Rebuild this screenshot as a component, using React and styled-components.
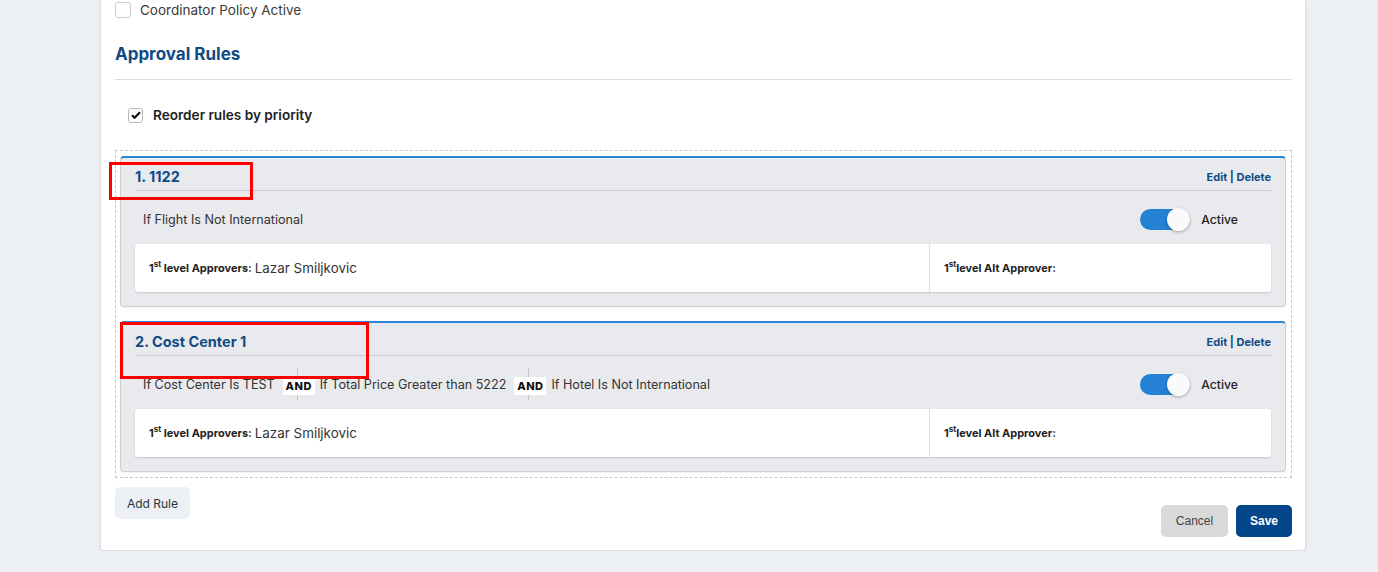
import React from 'react';
import styled, { createGlobalStyle } from 'styled-components';

const rules = [
  {
    id: 1,
    title: '1. 1122',
    conditions: ['If Flight Is Not International'],
    approver: 'Lazar Smiljkovic',
    mark: { left: -12, top: 4, width: 144, height: 38 },
  },
  {
    id: 2,
    title: '2. Cost Center 1',
    conditions: [
      'If Cost Center Is TEST',
      'If Total Price Greater than 5222',
      'If Hotel Is Not International',
    ],
    approver: 'Lazar Smiljkovic',
    mark: { left: -1, top: -1, width: 249, height: 57 },
  },
];

const App = () => {
  return (
    <>
      <GlobalStyle />
      <Panel>
        <CheckRow>
          <Box />
          <span>Coordinator Policy Active</span>
        </CheckRow>

        <Heading>Approval Rules</Heading>
        <Divider />

        <ReorderRow>
          <Box $checked>
            <svg width="12" height="12" viewBox="0 0 12 12">
              <path d="M2 6.2l2.6 2.6L10 3.2" fill="none" stroke="#111" strokeWidth="2.2" />
            </svg>
          </Box>
          <span>Reorder rules by priority</span>
        </ReorderRow>

        <DropZone>
          {rules.map((rule) => (
            <RuleCard key={rule.id}>
              <RuleHeader>
                <RuleTitle>{rule.title}</RuleTitle>
                <Links>
                  <a>Edit</a> | <a>Delete</a>
                </Links>
              </RuleHeader>

              <ConditionRow>
                <Conditions>
                  {rule.conditions.map((c, i) => (
                    <Condition key={c} $first={i === 0}>
                      {i > 0 && <AndBadge>AND</AndBadge>}
                      {c}
                    </Condition>
                  ))}
                </Conditions>
                <ToggleWrap>
                  <Toggle><Knob /></Toggle>
                  <span>Active</span>
                </ToggleWrap>
              </ConditionRow>

              <Approvers>
                <ApproverCol>
                  <Label>1<sup>st</sup> level Approvers:</Label>
                  <Name>{rule.approver}</Name>
                </ApproverCol>
                <ApproverCol $alt>
                  <Label>1<sup>st</sup>level Alt Approver:</Label>
                </ApproverCol>
              </Approvers>

              <Marker
                style={{
                  left: rule.mark.left,
                  top: rule.mark.top,
                  width: rule.mark.width,
                  height: rule.mark.height,
                }}
              />
            </RuleCard>
          ))}
        </DropZone>

        <Footer>
          <AddButton>Add Rule</AddButton>
          <Actions>
            <CancelButton>Cancel</CancelButton>
            <SaveButton>Save</SaveButton>
          </Actions>
        </Footer>
      </Panel>
    </>
  );
};

// ========== STYLED COMPONENTS ==========
const GlobalStyle = createGlobalStyle`
  html, body {
    margin: 0;
    padding: 0;
    background: #ecf0f4;
    font-family: Inter, 'Noto Sans', sans-serif;
    color: #333;
  }
  * { box-sizing: border-box; }
`;

const Panel = styled.div`
  margin-left: 100px;
  width: 1206px;
  background: #fff;
  border: 1px solid #dde1e6;
  border-top: none;
  border-radius: 0 0 4px 4px;
  box-shadow: 0 2px 3px rgba(0, 0, 0, 0.08);
  padding: 0 13px 13px 14px;
`;

const CheckRow = styled.label`
  display: flex;
  align-items: center;
  gap: 9px;
  height: 20px;
  font-size: 13.5px;
  color: #3a3a3a;
`;

const Box = styled.span`
  width: 16px;
  height: 16px;
  border: 1px solid #c9ccd1;
  border-radius: 3px;
  background: #fff;
  display: flex;
  align-items: center;
  justify-content: center;
  flex-shrink: 0;
  ${(p) => p.$checked && `
    width: 15px;
    height: 15px;
    border-color: #b5b8bd;
  `}
`;

const Heading = styled.h2`
  margin: 23px 0 0;
  font-size: 17px;
  line-height: 22px;
  font-weight: 700;
  color: #114a85;
`;

const Divider = styled.hr`
  margin: 14px 0 0;
  border: none;
  border-top: 1px solid #dcdcdc;
`;

const ReorderRow = styled.label`
  display: flex;
  align-items: center;
  gap: 10px;
  margin: 25px 0 0 13px;
  height: 20px;
  font-size: 13.6px;
  font-weight: 600;
  color: #222;
`;

const DropZone = styled.div`
  margin-top: 25px;
  border: 1px dashed #c8c8c8;
  padding: 5px 5px 5px 4px;
  display: flex;
  flex-direction: column;
  gap: 14px;
`;

const RuleCard = styled.div`
  position: relative;
  background: #e9eaee;
  border: 1px solid #cdd0d5;
  border-top: 2px solid #2b86d4;
  border-radius: 4px;
  padding: 0 14px 14px 14px;
  box-shadow: 0 1px 2px rgba(0, 0, 0, 0.06);
`;

const RuleHeader = styled.div`
  display: flex;
  justify-content: space-between;
  align-items: center;
  height: 33px;
  padding-top: 5px;
  border-bottom: 1px solid #c9cbd0;
`;

const RuleTitle = styled.div`
  font-size: 14.5px;
  font-weight: 700;
  color: #114a85;
`;

const Links = styled.div`
  font-size: 11px;
  font-weight: 700;
  color: #114a85;
  a { cursor: pointer; }
`;

const ConditionRow = styled.div`
  display: flex;
  align-items: center;
  justify-content: space-between;
  height: 32px;
  margin: 12px 0 9px;
  padding: 0 33px 0 8px;
`;

const Conditions = styled.div`
  display: flex;
  align-items: stretch;
  height: 100%;
`;

const Condition = styled.div`
  position: relative;
  display: flex;
  align-items: center;
  font-size: 12.6px;
  color: #333;
  padding: 0 22px 0 ${(p) => (p.$first ? '0' : '22px')};
  border-left: ${(p) => (p.$first ? 'none' : '1px solid #c4c4c4')};
`;

const AndBadge = styled.span`
  position: absolute;
  left: -15px;
  top: 9px;
  width: 32px;
  height: 18px;
  background: #fff;
  font-size: 11px;
  font-weight: 800;
  letter-spacing: 0.5px;
  color: #111;
  display: flex;
  align-items: center;
  justify-content: center;
`;

const ToggleWrap = styled.div`
  display: flex;
  align-items: center;
  gap: 11px;
  font-size: 12.2px;
  font-weight: 500;
  color: #222;
`;

const Toggle = styled.div`
  width: 50px;
  height: 21px;
  border-radius: 11px;
  background: #2382d4;
  position: relative;
`;

const Knob = styled.span`
  position: absolute;
  right: 0;
  top: -1px;
  width: 23px;
  height: 23px;
  border-radius: 50%;
  background: #fafafa;
  box-shadow: 0 1px 3px rgba(0, 0, 0, 0.3);
`;

const Approvers = styled.div`
  display: flex;
  height: 48px;
  background: #fff;
  border-radius: 3px;
  box-shadow: 0 1px 2px rgba(0, 0, 0, 0.15);
`;

const ApproverCol = styled.div`
  display: flex;
  align-items: center;
  gap: 3px;
  padding: 0 14px;
  ${(p) => p.$alt
    ? `width: 342px; border-left: 1px solid #ddd;`
    : `flex: 1;`}
`;

const Label = styled.span`
  font-size: 11px;
  font-weight: 700;
  color: #222;
  sup { font-size: 8px; line-height: 0; }
`;

const Name = styled.span`
  font-size: 13.4px;
  color: #333;
`;

const Marker = styled.div`
  position: absolute;
  border: 3px solid #f00;
  pointer-events: none;
`;

const Footer = styled.div`
  display: flex;
  justify-content: space-between;
  align-items: flex-end;
  margin-top: 9px;
`;

const AddButton = styled.button`
  align-self: flex-start;
  width: 75px;
  height: 32px;
  border: none;
  border-radius: 5px;
  background: #ecf0f4;
  font-family: Inter, sans-serif;
  font-size: 12px;
  color: #2a3440;
`;

const Actions = styled.div`
  display: flex;
  gap: 8px;
  margin-top: 18px;
`;

const CancelButton = styled.button`
  width: 67px;
  height: 32px;
  border: none;
  border-radius: 5px;
  background: #d9d9d9;
  font-family: 'Liberation Sans', Arial, sans-serif;
  font-size: 12px;
  color: #444;
`;

const SaveButton = styled.button`
  width: 56px;
  height: 32px;
  border: none;
  border-radius: 5px;
  background: #04468a;
  font-family: 'Liberation Sans', Arial, sans-serif;
  font-size: 12px;
  font-weight: 700;
  color: #fff;
`;

export default App;
